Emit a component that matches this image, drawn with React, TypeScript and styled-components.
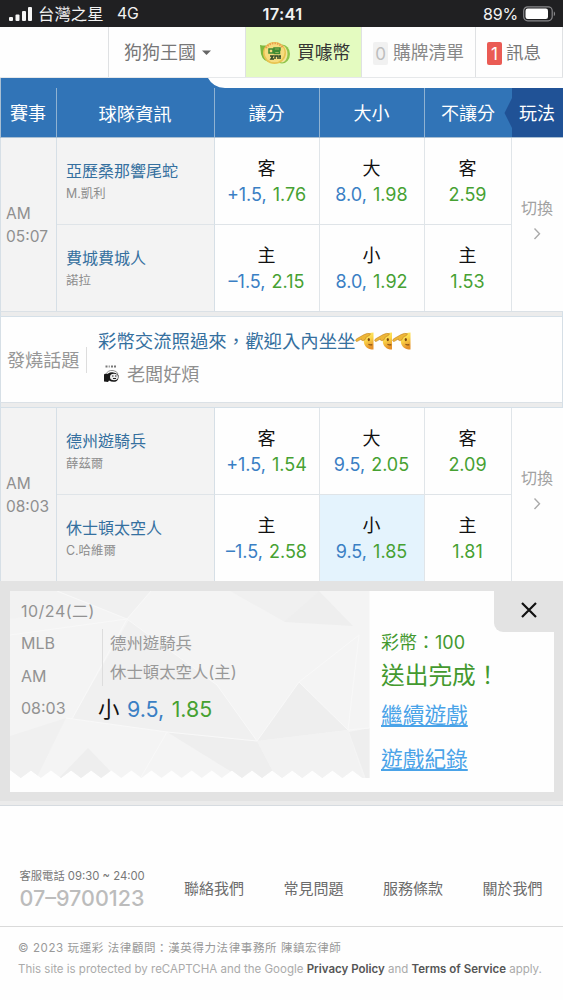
import React from "react";
import styled, { createGlobalStyle } from "styled-components";

const GlobalStyle = createGlobalStyle`
  * { box-sizing: border-box; }
  body {
    margin: 0;
    background: #fefefe;
    font-family: Inter, "Noto Sans CJK TC", sans-serif;
    font-size: 18px;
    color: #111;
  }
`;

const BLUE = "#3174b7";
const LINE = "#d6dfe6";

const Page = styled.div`
  width: 563px;
  height: 1000px;
  overflow: hidden;
  display: flex;
  flex-direction: column;
`;

const Text = styled.span<{ $size?: number; $color?: string; $weight?: number; $track?: number; $line?: number; $word?: number }>`
  display: block;
  white-space: pre;
  font-size: ${(p) => p.$size ?? 18}px;
  color: ${(p) => p.$color ?? "inherit"};
  font-weight: ${(p) => p.$weight ?? 400};
  letter-spacing: ${(p) => p.$track ?? 0}px;
  word-spacing: ${(p) => p.$word ?? 0}px;
  line-height: ${(p) => p.$line ?? 26}px;
`;

/* Status bar */
const StatusBar = styled.div`
  height: 27px;
  background: #202022;
  color: #f2f2f2;
  display: grid;
  grid-template-columns: 1fr auto 1fr;
  align-items: center;
  padding: 1px 7px 0 9px;
  flex: none;
`;
const StatusGroup = styled.div<{ $end?: boolean }>`
  display: flex;
  align-items: center;
  justify-content: ${(p) => (p.$end ? "flex-end" : "flex-start")};
  gap: 5px;
`;

/* Navigation */
const Nav = styled.nav`
  height: 51px;
  flex: none;
  display: grid;
  grid-template-columns: 109px 137px 116px 114px 87px;
  border-bottom: 1px solid #e6e8ea;
`;
const NavItem = styled.div<{ $green?: boolean; $pad?: number; $gap?: number }>`
  display: flex;
  align-items: center;
  padding: 2px 0 0 ${(p) => p.$pad ?? 0}px;
  gap: ${(p) => p.$gap ?? 5}px;
  border-right: 1px solid #dfe1e3;
  background: ${(p) => (p.$green ? "#e4fbc0" : "transparent")};
`;
const Badge = styled.span<{ $alert?: boolean }>`
  width: 15px;
  height: 23px;
  border-radius: 2px;
  background: ${(p) => (p.$alert ? "#ea5b54" : "#f1f1f1")};
  color: ${(p) => (p.$alert ? "#fff" : "#bdbdbd")};
  font-size: 17px;
  line-height: 25px;
  text-align: center;
`;

/* Table */
const HeadTop = styled.div`
  height: 10px;
  flex: none;
  display: flex;
  border-left: 1px solid #a9bfd3;
`;
const HeadTab = styled.div`
  width: 207px;
  background: ${BLUE};
`;
const HeadRow = styled.div`
  height: 50px;
  flex: none;
  display: grid;
  grid-template-columns: 56px 158px 105px 105px 87px 51px;
  background: ${BLUE};
  border-left: 1px solid #a9bfd3;
  border-bottom: 1px solid #a9bfd3;
  color: #fff;
`;
const HeadCell = styled.div<{ $play?: boolean; $plain?: boolean }>`
  display: flex;
  align-items: center;
  justify-content: center;
  position: relative;
  padding: 2px 1px 0 0;
  background: ${(p) => (p.$play ? "#205296" : "transparent")};
  border-right: ${(p) => (p.$plain || p.$play ? "0" : "1px solid #8fb2d2")};
`;
const Pointer = styled.svg`
  position: absolute;
  left: -8px;
  top: 10px;
`;

const Game = styled.section`
  height: 173px;
  flex: none;
  display: grid;
  grid-template-columns: 56px 158px 105px 105px 87px 51px;
  grid-template-rows: 87px 86px;
  border-left: 1px solid ${LINE};
  border-right: 1px solid ${LINE};
`;
const Tall = styled.div<{ $gray?: boolean }>`
  grid-row: span 2;
  display: flex;
  flex-direction: column;
  justify-content: center;
  align-items: ${(p) => (p.$gray ? "flex-start" : "center")};
  padding: ${(p) => (p.$gray ? "0 0 0 5px" : "0 1px 7px 0")};
  background: ${(p) => (p.$gray ? "#f3f3f3" : "#fefefe")};
  border-right: ${(p) => (p.$gray ? `1px solid ${LINE}` : "0")};
`;
const Team = styled.div<{ $last?: boolean }>`
  background: #f3f3f3;
  display: flex;
  flex-direction: column;
  justify-content: center;
  padding: 1px 0 0 9px;
  border-right: 1px solid ${LINE};
  border-bottom: ${(p) => (p.$last ? "0" : "1px solid #dfe4e8")};
`;
const Odds = styled.div<{ $last?: boolean; $picked?: boolean }>`
  background: ${(p) => (p.$picked ? "#e4f3fd" : "#fefefe")};
  display: flex;
  flex-direction: column;
  align-items: center;
  justify-content: center;
  padding: 2px 1px 0 0;
  border-right: 1px solid #e0e5e9;
  border-bottom: ${(p) => (p.$last ? "0" : "1px solid #dfe4e8")};
`;
const Line = styled.span`
  color: #3a7fc4;
`;
const Price = styled.span`
  color: #46a132;
`;
const Gap = styled.div`
  height: 6px;
  flex: none;
  background: #ececec;
  border: 1px solid #d5e0e8;
  border-top-color: #dbe1e6;
`;

/* Topic */
const Topic = styled.section`
  height: 85px;
  flex: none;
  display: flex;
  align-items: center;
  border-left: 1px solid ${LINE};
  border-right: 1px solid ${LINE};
  padding-left: 6px;
`;
const TopicLabel = styled.div`
  width: 80px;
  height: 26px;
  border-right: 1px solid #ddd;
`;
const TopicBody = styled.div`
  padding-left: 11px;
  display: flex;
  flex-direction: column;
  gap: 7px;
  padding-bottom: 4px;
`;
const InlineRow = styled.div<{ $pad?: number; $gap?: number }>`
  display: flex;
  align-items: center;
  padding-left: ${(p) => p.$pad ?? 0}px;
  gap: ${(p) => p.$gap ?? 0}px;
`;

/* Ticket */
const TicketWrap = styled.section`
  height: 220px;
  flex: none;
  background: #e3e3e3;
  padding: 10px 9px 9px 10px;
  position: relative;
`;
const Ticket = styled.div`
  height: 201px;
  background: #fefefe;
  display: flex;
`;
const Stub = styled.div`
  width: 359px;
  position: relative;
`;
const StubArt = styled.svg`
  position: absolute;
  inset: 0;
`;
const StubBody = styled.div`
  position: relative;
  display: grid;
  grid-template-columns: 77px 1fr;
  padding: 4px 0 0 11px;
`;
const StubRight = styled.div`
  padding-top: 34px;
`;
const Matchup = styled.div`
  margin-left: 4px;
  height: 57px;
  border-left: 1px solid #ddd;
  padding-left: 7px;
`;
const Result = styled.div`
  padding: 38px 0 0 12px;
`;
const ResultLinks = styled.div`
  margin-top: -2px;
`;
const ResultLink = styled.a`
  display: block;
  width: 87px;
  font-size: 21.7px;
  line-height: 44px;
  color: #4aa3e8;
  text-decoration: underline;
  text-decoration-thickness: 1.5px;
  text-underline-offset: 2px;
  white-space: nowrap;
`;
const Close = styled.button`
  position: absolute;
  right: 0;
  top: 0;
  width: 69px;
  height: 51px;
  padding: 6px 0 0;
  border: 0;
  border-bottom-left-radius: 9px;
  background: #e3e3e3;
  display: flex;
  align-items: center;
  justify-content: center;
`;
const TableEnd = styled.div`
  height: 5px;
  flex: none;
  background: #ebebeb;
  border-bottom: 1px solid #d6dbe0;
`;

/* Footer */
const Footer = styled.footer`
  margin-top: 59px;
  flex: none;
`;
const FooterTop = styled.div`
  height: 62px;
  border-bottom: 1px solid #dadada;
  display: grid;
  grid-template-columns: 164.5px 99.5px 99.5px 99.5px 1fr;
  padding-left: 19.5px;
`;
const FooterLink = styled.a`
  padding-top: 12px;
`;
const Legal = styled.div`
  padding: 10px 0 0 18px;
`;
const Strong = styled.b`
  color: #555;
  font-weight: 600;
`;

const Signal = () => (
  <svg width="24" height="16" viewBox="0 0 24 16" fill="#f5f5f5">
    <rect x="0" y="11" width="4" height="4" rx="1" />
    <rect x="6.5" y="8.500" width="4" height="6.500" rx="1" />
    <rect x="13" y="5" width="4" height="10" rx="1" />
    <rect x="19" y="1" width="4" height="14" rx="1" />
  </svg>
);

const Battery = () => (
  <svg width="33" height="16" viewBox="0 0 33 16">
    <rect x="0.7" y="0.8" width="28.500" height="14" rx="4" fill="none" stroke="#87878a" strokeWidth="1.2" />
    <rect x="2.500" y="2.600" width="22.500" height="10.400" rx="2.200" fill="#fff" />
    <path d="M30.800 5.500 C32.500 6.200 32.500 9.400 30.800 10.100Z" fill="#87878a" />
  </svg>
);

const Coins = () => (
  <svg width="32" height="27" viewBox="0 0 32 27">
    <path d="M1 5 Q6 6 9 5 L12 22 Q4 22 2 14Z" fill="#7db83e" />
    <ellipse cx="23" cy="14" rx="8" ry="9.500" fill="#8fc44b" />
    <ellipse cx="23" cy="14" rx="5.500" ry="8.500" fill="#f2e59a" />
    <ellipse cx="15.500" cy="13" rx="11.500" ry="11" fill="#e8c351" />
    <ellipse cx="15.500" cy="12.500" rx="10" ry="9.800" fill="#f6dc7e" />
    <path d="M7 8 A10 10 0 0 1 24 8" fill="none" stroke="#e99a4d" strokeWidth="2" strokeDasharray="1.500 1" />
    <path d="M10 9 h4 v4 h-4z M15 8 h6 v2 h-6z M15.500 11.500 h5 v2 h-5z" fill="none" stroke="#3f8b32" strokeWidth="1.500" />
    <path d="M11 16 h3 l-2 3 h3 M16 19 v-3 h3 v3 M20 16 h2 M21 16 v3" fill="none" stroke="#2f4a28" strokeWidth="1.500" />
  </svg>
);

const Salute = () => (
  <svg width="18.500" height="20" viewBox="0 0 18.5 20">
    <defs>
      <linearGradient id="face" x1="0" y1="0" x2="0.300" y2="1">
        <stop offset="0" stopColor="#fff27a" />
        <stop offset="0.500" stopColor="#fbd548" />
        <stop offset="1" stopColor="#e5912a" />
      </linearGradient>
    </defs>
    <path d="M18.500 1.500 C11.500 1.500 8.800 6 8.800 10.200 C8.800 15 12.500 18.600 18.500 18.600Z" fill="url(#face)" />
    <ellipse cx="13.800" cy="8.600" rx="1.100" ry="1.700" fill="#7a4512" />
    <path d="M13.500 13.200 Q15 14.200 17.300 13.600" stroke="#8a5216" strokeWidth="1.200" fill="none" />
    <path d="M0.800 10 Q0.200 8.600 2 7.600 L9 3.600 Q13 1.600 15.500 2.800 Q15.200 4.800 11.500 5.800 L10 8.800 Q7.500 10.600 6.300 8.900 L6.500 8 L2.500 10.300 Q1.300 10.800 0.800 10Z" fill="#eeb637" stroke="#b9791f" strokeWidth="0.500" />
  </svg>
);

const Avatar = () => (
  <svg width="17" height="20" viewBox="0 0 17 20">
    <path d="M2.500 2.500 h2 M5.700 2.500 h1 M8 2.500 h2 M11 2.500 h2" stroke="#777" strokeWidth="1.800" />
    <path d="M3 10 Q5 6 10 6.500 Q14 7 15 10" fill="none" stroke="#777" strokeWidth="0.800" />
    <path d="M1 11 Q1 9 4 10 L7 8.500 Q12 7.500 15.500 11 Q16 16 13 17.500 Q9 18.500 6 16.500 L5 18 L1 17.500Z" fill="#181818" />
    <ellipse cx="11" cy="13" rx="4" ry="3.200" fill="#eee" />
    <path d="M9 12 h1.500 M12 12 h1.500 M10 14.500 h3" stroke="#222" strokeWidth="1" />
  </svg>
);

const Facets = () => {
  const zig = Array.from({ length: 18 }, (_, i) => {
    const x = 359.5 - i * 20.1;
    return `L${x - 7} 187 L${x - 17} 179.5`;
  }).join(" ");
  return (
    <StubArt width="360" height="188" viewBox="0 0 360 188">
      <clipPath id="stub">
        <path d={`M0 0 H359.5 V187 ${zig} L0 179 Z`} />
      </clipPath>
      <g clipPath="url(#stub)">
        <rect width="360" height="188" fill="#f4f4f4" />
        <g fill="#f0f0f0">
          <path d="M47 0 H141 L117 28Z" />
          <path d="M0 0 H47 L85 15 L0 28Z" fill="#f2f2f2" />
          <path d="M119 29 L207 94 L247 150 L157 141 L62 128Z" />
          <path d="M157 141 L247 150 L267 188 H233Z" fill="#eeeeee" />
          <path d="M78 157 L48 188 H108Z" fill="#eeeeee" />
          <path d="M0 145 L56 127 L26 188 H0Z" />
          <path d="M220 0 H309 L275 31Z" />
          <path d="M309 0 L274 31 L343 35Z" fill="#eeeeee" />
          <path d="M289 91 L338 139 L247 150Z" fill="#eeeeee" />
          <path d="M339 141 L360 137 V188 H356Z" fill="#eeeeee" />
          <path d="M247 150 L338 139 L354 188 H267Z" fill="#f2f2f2" />
        </g>
        <path
          d="M47 0 L117 28 L141 0 M0 44 L117 28 L207 94 L247 150 L289 91 L349 44 M62 128 L117 28 M56 127 L157 141 L247 150 M289 91 L338 139 L360 137 M338 139 L349 44 M157 141 L130 188"
          fill="none"
          stroke="#f8f8f8"
          strokeWidth="1"
        />
      </g>
    </StubArt>
  );
};

type OddsData = { side: string; line?: string; price: string; picked?: boolean };
type Row = { team: string; pitcher: string; odds: OddsData[] };

const games: { time: string; rows: Row[] }[] = [
  {
    time: "05:07",
    rows: [
      { team: "亞歷桑那響尾蛇", pitcher: "M.凱利", odds: [{ side: "客", line: "+1.5,", price: "1.76" }, { side: "大", line: "8.0,", price: "1.98" }, { side: "客", price: "2.59" }] },
      { team: "費城費城人", pitcher: "諾拉", odds: [{ side: "主", line: "–1.5,", price: "2.15" }, { side: "小", line: "8.0,", price: "1.92" }, { side: "主", price: "1.53" }] },
    ],
  },
  {
    time: "08:03",
    rows: [
      { team: "德州遊騎兵", pitcher: "薛茲爾", odds: [{ side: "客", line: "+1.5,", price: "1.54" }, { side: "大", line: "9.5,", price: "2.05" }, { side: "客", price: "2.09" }] },
      { team: "休士頓太空人", pitcher: "C.哈維爾", odds: [{ side: "主", line: "–1.5,", price: "2.58" }, { side: "小", line: "9.5,", price: "1.85", picked: true }, { side: "主", price: "1.81" }] },
    ],
  },
];

const GameRow = ({ row, last }: { row: Row; last: boolean }) => (
  <>
    <Team $last={last}>
      <Text $size={16} $color="#35709f" $line={24}>{row.team}</Text>
      <Text $size={12.4} $color="#8d8d8d" $line={22}>{row.pitcher}</Text>
    </Team>
    {row.odds.map((o, i) => (
      <Odds key={i} $last={last} $picked={o.picked}>
        <Text>{o.side}</Text>
        <Text $word={1}>
          {o.line && <Line>{o.line} </Line>}
          <Price>{o.price}</Price>
        </Text>
      </Odds>
    ))}
  </>
);

const GameBlock = ({ game }: { game: { time: string; rows: Row[] } }) => (
  <Game>
    <Tall $gray>
      <Text $size={15.5} $color="#8f8f8f" $line={23}>AM</Text>
      <Text $size={15.5} $color="#8f8f8f" $line={23}>{game.time}</Text>
    </Tall>
    <GameRow row={game.rows[0]} last={false} />
    <Tall>
      <Text $size={16} $color="#a2a2a2">切換</Text>
      <svg width="10" height="26" viewBox="0 0 10 26">
        <path d="M2.500 7.500 L7.500 12.800 L2.500 18" fill="none" stroke="#aaa" strokeWidth="1.400" />
      </svg>
    </Tall>
    <GameRow row={game.rows[1]} last />
  </Game>
);

export default function App() {
  return (
    <Page>
      <GlobalStyle />
      <StatusBar>
        <StatusGroup>
          <Signal />
          <Text $size={16.4}>台灣之星</Text>
          <Text $size={15.8} $track={-0.2}>  4G</Text>
        </StatusGroup>
        <Text $size={16.5} $weight={600} $track={0.3}>17:41</Text>
        <StatusGroup $end>
          <Text $size={16} $track={-0.2}>89%</Text>
          <Battery />
        </StatusGroup>
      </StatusBar>

      <Nav>
        <NavItem />
        <NavItem $pad={15} $gap={6}>
          <Text $size={18} $color="#777">狗狗王國</Text>
          <svg width="9" height="6" viewBox="0 0 9 6"><path d="M0 0.500 H9 L4.500 5Z" fill="#666" /></svg>
        </NavItem>
        <NavItem $green $pad={13} $gap={6}>
          <Coins />
          <Text $size={17.8} $color="#333">買噱幣</Text>
        </NavItem>
        <NavItem $pad={11}>
          <Badge>0</Badge>
          <Text $size={17.8} $color="#888">購牌清單</Text>
        </NavItem>
        <NavItem $pad={11} $gap={4}>
          <Badge $alert>1</Badge>
          <Text $size={17.6} $color="#777">訊息</Text>
        </NavItem>
      </Nav>

      <HeadTop>
        <HeadTab />
        <svg width="20" height="10" viewBox="0 0 20 10"><path d="M0 0 Q5 9.500 17 10 H0Z" fill={BLUE} /></svg>
      </HeadTop>
      <HeadRow>
        <HeadCell><Text>賽事</Text></HeadCell>
        <HeadCell><Text $size={18.3}>球隊資訊</Text></HeadCell>
        <HeadCell><Text>讓分</Text></HeadCell>
        <HeadCell><Text>大小</Text></HeadCell>
        <HeadCell $plain><Text>不讓分</Text></HeadCell>
        <HeadCell $play>
          <Pointer width="8" height="30" viewBox="0 0 8 30"><path d="M8 0 L0.500 15 L8 30Z" fill="#205296" /></Pointer>
          <Text>玩法</Text>
        </HeadCell>
      </HeadRow>

      <GameBlock game={games[0]} />
      <Gap />
      <Topic>
        <TopicLabel><Text $color="#979797" $size={18.1}>發燒話題</Text></TopicLabel>
        <TopicBody>
          <InlineRow>
            <Text $size={18.4} $color="#35709f">彩幣交流照過來，歡迎入內坐坐</Text>
            <Salute />
            <Salute />
            <Salute />
          </InlineRow>
          <InlineRow $pad={5} $gap={7}>
            <Avatar />
            <Text $size={18.1} $color="#8f8f8f">老闆好煩</Text>
          </InlineRow>
        </TopicBody>
      </Topic>
      <Gap />
      <GameBlock game={games[1]} />

      <TicketWrap>
        <Ticket>
          <Stub>
            <Facets />
            <StubBody>
              <div>
                <Text $size={16} $color="#929292" $line={32.3} $track={0.5}>10/24(二)</Text>
                <Text $size={16} $color="#929292" $line={32.3}>MLB</Text>
                <Text $size={16} $color="#929292" $line={32.3}>AM</Text>
                <Text $size={16} $color="#929292" $line={32.3}>08:03</Text>
              </div>
              <StubRight>
                <Matchup>
                  <Text $size={16.4} $color="#999" $line={28.5}>德州遊騎兵</Text>
                  <Text $size={16.4} $color="#999" $line={28.5}>休士頓太空人(主)</Text>
                </Matchup>
                <Text $size={21.4} $line={46} $word={1.5}>小 <Line>9.5, </Line><Price>1.85</Price></Text>
              </StubRight>
            </StubBody>
          </Stub>
          <Result>
            <Text $size={18} $color="#43992f" $line={28}>彩幣：100</Text>
            <Text $size={23.7} $color="#43992f" $line={38}>送出完成！</Text>
            <ResultLinks>
              <ResultLink>繼續遊戲</ResultLink>
              <ResultLink>遊戲紀錄</ResultLink>
            </ResultLinks>
          </Result>
        </Ticket>
        <Close aria-label="close">
          <svg width="16" height="16" viewBox="0 0 16 16"><path d="M1 1 L15 15 M15 1 L1 15" stroke="#111" strokeWidth="2.200" /></svg>
        </Close>
      </TicketWrap>
      <TableEnd />

      <Footer>
        <FooterTop>
          <div>
            <Text $size={11.3} $color="#777" $line={23}>客服電話 09:30 ~ 24:00</Text>
            <Text $size={21.5} $color="#bcbcbc" $weight={500} $line={20}>07–9700123</Text>
          </div>
          {["聯絡我們", "常見問題", "服務條款", "關於我們"].map((label) => (
            <FooterLink key={label}><Text $size={15} $color="#6b6b6b" $line={24}>{label}</Text></FooterLink>
          ))}
        </FooterTop>
        <Legal>
          <Text $size={11.5} $color="#999" $line={22} $track={0.6}>© 2023 玩運彩 法律顧問：漢英得力法律事務所 陳鎮宏律師</Text>
          <Text $size={11.5} $color="#aaa" $line={21}>
            This site is protected by reCAPTCHA and the Google <Strong>Privacy Policy</Strong> and <Strong>Terms of Service</Strong> apply.
          </Text>
        </Legal>
      </Footer>
    </Page>
  );
}
